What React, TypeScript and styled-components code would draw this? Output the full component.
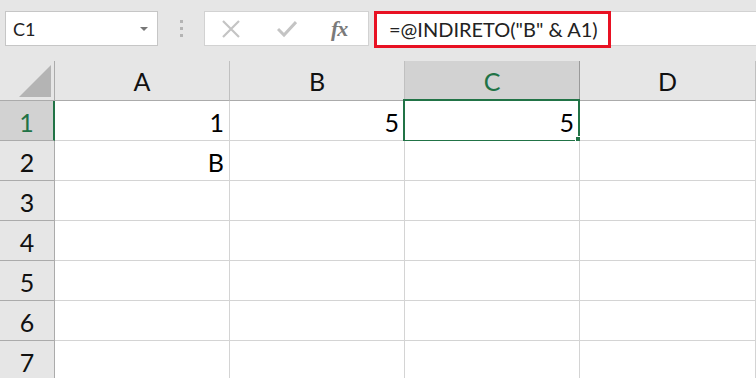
import React from "react";
import styled, { createGlobalStyle } from "styled-components";

const GlobalStyle = createGlobalStyle`
  html, body {
    margin: 0;
    padding: 0;
    background: #e6e6e6;
    overflow: hidden;
  }
  body {
    font-family: Lato, "Liberation Sans", sans-serif;
  }
`;

const Page = styled.div`
  width: 756px;
  height: 378px;
  overflow: hidden;
  background: #e6e6e6;
`;

const Toolbar = styled.div`
  height: 61px;
  display: flex;
  align-items: flex-start;
  padding: 11px 0 0 5px;
  box-sizing: border-box;
`;

const NameBox = styled.div`
  width: 153px;
  height: 35px;
  box-sizing: border-box;
  background: #fff;
  border: 1px solid #c6c6c6;
  display: flex;
  align-items: center;
  justify-content: space-between;
  padding: 0 9px 0 7px;
  font-size: 18px;
  color: #222;
`;

const DropArrow = styled.span`
  width: 0;
  height: 0;
  border-left: 4px solid transparent;
  border-right: 4px solid transparent;
  border-top: 4px solid #777;
`;

const Grip = styled.div`
  width: 46px;
  height: 35px;
  display: flex;
  flex-direction: column;
  align-items: center;
  justify-content: center;
  gap: 4px;

  span {
    width: 3px;
    height: 3px;
    background: #b4b4b4;
  }
`;

const IconsBox = styled.div`
  width: 165px;
  height: 35px;
  box-sizing: border-box;
  background: #fff;
  border: 1px solid #d2d2d2;
  display: flex;
  align-items: center;
  padding-left: 16px;
`;

const IconSlot = styled.div<{ $w: number }>`
  width: ${(p) => p.$w}px;
  display: flex;
  align-items: center;
`;

const Fx = styled.span`
  font-family: "Liberation Serif", serif;
  font-style: italic;
  font-weight: bold;
  font-size: 22px;
  color: #7a7a7a;
  letter-spacing: -1px;
`;

const FormulaBox = styled.div`
  flex: 1;
  margin-left: 5px;
  height: 35px;
  box-sizing: border-box;
  background: #fff;
  border: 1px solid #d2d2d2;
  border-right: none;
  display: flex;
  align-items: center;
`;

const Highlight = styled.div`
  height: 37px;
  width: 237px;
  margin-left: -1px;
  margin-top: 1px;
  box-sizing: border-box;
  border: 3px solid #e81123;
  display: flex;
  align-items: center;
  padding-left: 12px;
  font-size: 20px;
  color: #222;
  white-space: nowrap;
`;

const Grid = styled.div`
  display: grid;
  grid-template-columns: 55px 175px 175px 175px 176px;
  grid-auto-rows: 40px;
`;

const Corner = styled.div`
  border-right: 1px solid #ababab;
  border-bottom: 1px solid #ababab;
  position: relative;

  &::after {
    content: "";
    position: absolute;
    right: 3px;
    bottom: 3px;
    width: 0;
    height: 0;
    border-left: 32px solid transparent;
    border-bottom: 32px solid #b4b4b4;
  }
`;

const ColHead = styled.div<{ $sel?: boolean }>`
  background: ${(p) => (p.$sel ? "#d2d2d2" : "#e6e6e6")};
  border-right: 1px solid ${(p) => (p.$sel ? "#9a9a9a" : "#c0c0c0")};
  border-bottom: ${(p) => (p.$sel ? "2px solid #217346" : "1px solid #ababab")};
  display: flex;
  align-items: center;
  justify-content: center;
  font-size: 25px;
  color: ${(p) => (p.$sel ? "#217346" : "#111")};
  padding-top: ${(p) => (p.$sel ? "1px" : "0")};
`;

const RowHead = styled.div<{ $sel?: boolean }>`
  background: ${(p) => (p.$sel ? "#d2d2d2" : "#e6e6e6")};
  border-right: ${(p) => (p.$sel ? "2px solid #217346" : "1px solid #ababab")};
  border-bottom: 1px solid #ababab;
  display: flex;
  align-items: center;
  justify-content: center;
  font-size: 25px;
  color: ${(p) => (p.$sel ? "#217346" : "#111")};
  padding-top: 2px;
  box-sizing: border-box;
`;

const Cell = styled.div<{ $active?: boolean }>`
  background: #fff;
  border-right: 1px solid #d4d4d4;
  border-bottom: 1px solid #d4d4d4;
  display: flex;
  align-items: center;
  justify-content: flex-end;
  padding: 2px 5px 0 0;
  font-size: 25px;
  color: #000;
  position: relative;

  ${(p) =>
    p.$active &&
    `
    &::before {
      content: "";
      position: absolute;
      left: -2px;
      top: -2px;
      right: -1px;
      bottom: -2px;
      border: 2px solid #217346;
    }
    &::after {
      content: "";
      position: absolute;
      right: -3px;
      bottom: -3px;
      width: 6px;
      height: 6px;
      background: #217346;
      border: 1px solid #fff;
      border-width: 1px 0 0 1px;
    }
  `}
`;

const columns = ["A", "B", "C", "D"];
const rows = [1, 2, 3, 4, 5, 6, 7];
const data: Record<string, string> = {
  A1: "1",
  B1: "5",
  C1: "5",
  A2: "B",
};

function CrossIcon() {
  return (
    <svg width="20" height="20" viewBox="0 0 20 20">
      <path d="M2 2 L18 18 M18 2 L2 18" stroke="#c4c4c4" strokeWidth="2.2" fill="none" />
    </svg>
  );
}

function CheckIcon() {
  return (
    <svg width="20" height="18" viewBox="0 0 20 18">
      <path d="M1 9 L7 15 L19 2" stroke="#c4c4c4" strokeWidth="3" fill="none" />
    </svg>
  );
}

export default function App() {
  return (
    <Page>
      <GlobalStyle />
      <Toolbar>
        <NameBox>
          C1
          <DropArrow />
        </NameBox>
        <Grip>
          <span />
          <span />
          <span />
        </Grip>
        <IconsBox>
          <IconSlot $w={56}>
            <CrossIcon />
          </IconSlot>
          <IconSlot $w={54}>
            <CheckIcon />
          </IconSlot>
          <IconSlot $w={30}>
            <Fx>fx</Fx>
          </IconSlot>
        </IconsBox>
        <FormulaBox>
          <Highlight>=@INDIRETO("B" &amp; A1)</Highlight>
        </FormulaBox>
      </Toolbar>
      <Grid>
        <Corner />
        {columns.map((c) => (
          <ColHead key={c} $sel={c === "C"}>
            {c}
          </ColHead>
        ))}
        {rows.map((r) => (
          <React.Fragment key={r}>
            <RowHead $sel={r === 1}>{r}</RowHead>
            {columns.map((c) => (
              <Cell key={c + r} $active={c + r === "C1"}>
                {data[c + r] ?? ""}
              </Cell>
            ))}
          </React.Fragment>
        ))}
      </Grid>
    </Page>
  );
}
